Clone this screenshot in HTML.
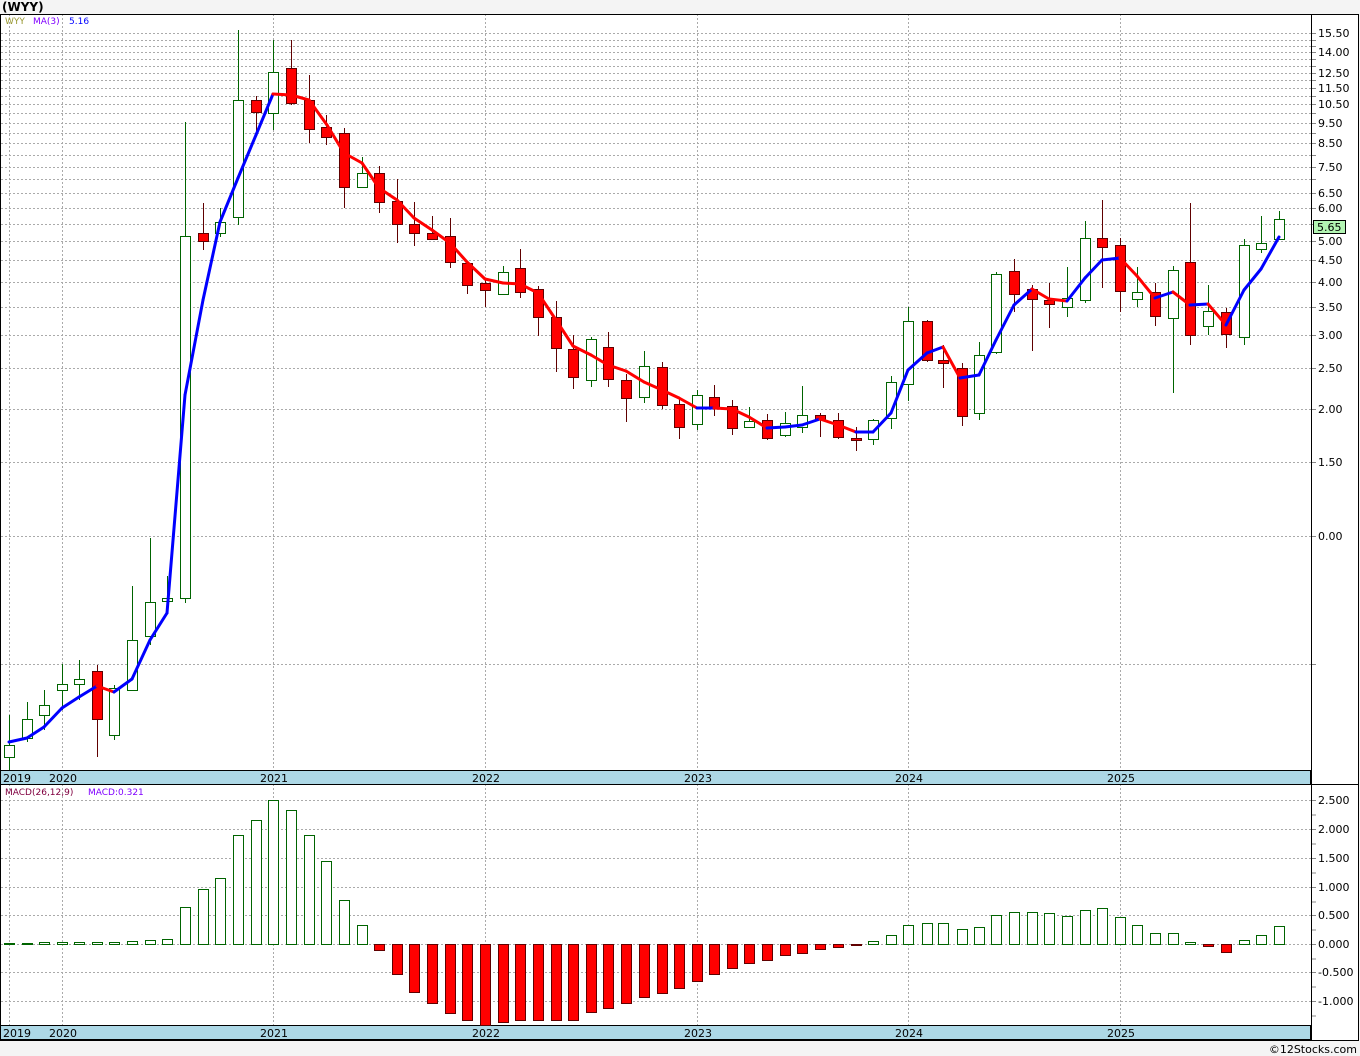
<!DOCTYPE html>
<html><head><meta charset="utf-8"><style>
html,body{margin:0;padding:0;background:#f4f4f4;width:1360px;height:1056px;overflow:hidden}
svg{display:block}
text{font-family:"DejaVu Sans","Liberation Sans",sans-serif}
</style></head><body>
<svg id="s" width="1360" height="1056" xmlns="http://www.w3.org/2000/svg"></svg>
<script>
const s=document.getElementById('s');let h='';
h+='<rect x="0" y="0" width="1360" height="1056" fill="#f4f4f4"/>';
h+='<rect x="0" y="14" width="1358" height="1026" fill="#fff"/>';
h+='<text x="2" y="11" font-size="12" font-weight="bold" fill="#000">(WYY)</text>';
// main grid
const gy=[33,40,46,52,59,66,73,80,88,96,104,113,123,133,143,155,167,179,193,208,224,241,260,282,307,335,368,409,462,536,664];
gy.forEach(y=>{h+=`<line x1="1" x2="1311" y1="${y+.5}" y2="${y+.5}" stroke="#aaa" stroke-dasharray="2,2"/>`;h+=`<line x1="1311" x2="1316" y1="${y+.5}" y2="${y+.5}" stroke="#888"/>`;});
const vx=[9,62,273,485,697,908,1120];
vx.forEach(x=>{h+=`<line x1="${x+.5}" x2="${x+.5}" y1="14" y2="770" stroke="#aaa" stroke-dasharray="2,2"/>`;h+=`<line x1="${x+.5}" x2="${x+.5}" y1="784" y2="1025" stroke="#aaa" stroke-dasharray="2,2"/>`;});
const lab=[[33,'15.50'],[52,'14.00'],[73,'12.50'],[88,'11.50'],[104,'10.50'],[123,'9.50'],[143,'8.50'],[167,'7.50'],[193,'6.50'],[208,'6.00'],[241,'5.00'],[260,'4.50'],[282,'4.00'],[307,'3.50'],[335,'3.00'],[368,'2.50'],[409,'2.00'],[462,'1.50'],[536,'0.00']];
lab.forEach(([y,t])=>{h+=`<text x="1318" y="${y+4}" font-size="11" fill="#000">${t}</text>`;});
// candles: x,H,L,bt,bb,up
const C=[[9,715,770,745,757,1],[27,702,742,719,738,1],[44,690,730,705,715,1],[62,664,710,684,690,1],[79,660,700,679,684,1],[97,665,757,671,719,0],[114,685,740,688,735,1],[132,586,690,640,690,1],[150,538,645,602,636,1],[167,576,605,598,601,1],[185,122,603,236,598,1],[203,203,250,233,241,0],[220,208,237,222,233,1],[238,30,225,100,217,1],[256,96,132,100,112,0],[273,40,130,72,113,1],[291,40,105,68,103,0],[309,75,143,100,129,0],[326,115,145,127,137,0],[344,128,208,133,187,0],[362,157,187,173,187,1],[379,166,213,173,202,0],[397,179,243,201,224,0],[414,202,246,224,233,0],[432,216,240,233,239,0],[450,218,268,236,262,0],[467,262,294,263,285,0],[485,280,307,283,290,0],[503,266,294,272,294,1],[520,249,298,268,292,0],[538,286,336,289,317,0],[556,301,372,317,348,0],[573,335,389,349,377,0],[591,337,387,339,380,1],[608,332,387,347,379,0],[626,374,422,380,398,0],[644,351,403,366,397,1],[662,362,409,367,405,0],[679,399,439,404,427,0],[697,390,430,395,424,1],[714,385,416,397,407,0],[732,400,435,406,428,0],[749,407,428,421,427,1],[767,414,440,420,438,0],[785,412,437,423,435,1],[802,386,433,415,427,1],[820,413,437,415,419,0],[838,413,439,420,437,0],[856,427,451,438,440,0],[873,419,445,420,439,1],[891,376,429,382,418,1],[908,307,401,321,384,1],[927,320,362,321,360,0],[943,345,388,360,363,0],[962,363,426,368,416,0],[979,342,420,355,413,1],[996,272,354,274,352,1],[1014,259,312,271,294,0],[1032,285,351,289,299,0],[1049,283,328,300,304,0],[1067,267,317,298,307,1],[1085,221,303,238,300,1],[1102,200,288,238,247,0],[1120,238,312,245,291,0],[1137,267,307,292,299,1],[1155,283,326,292,316,0],[1173,266,393,270,318,1],[1190,203,345,262,335,0],[1208,285,335,311,326,1],[1226,308,348,312,334,0],[1244,239,345,245,337,1],[1261,216,253,243,249,1],[1279,211,240,219,239,1]];
C.forEach(([x,H,L,t,b,u])=>{const wc=u?'#006400':'#600000';
h+=`<line x1="${x+.5}" x2="${x+.5}" y1="${H}" y2="${L}" stroke="${wc}" stroke-width="1"/>`;
h+=`<rect x="${x-5+.5}" y="${t+.5}" width="10" height="${Math.max(b-t,1)}" fill="${u?'#fff':'#f00'}" stroke="${u?'#006400':'#600000'}" stroke-width="1"/>`;});
// MA
const M=[[9,742],[27,738],[44,727],[62,708],[79,697],[97,686],[114,692],[132,679],[150,640],[167,613],[185,395],[203,300],[220,222],[238,178],[256,135],[273,94],[291,95],[309,100],[327,125],[344,153],[362,163],[379,188],[397,200],[414,218],[432,230],[450,243],[467,262],[485,279],[503,283],[520,284],[538,293],[556,320],[573,346],[591,355],[608,365],[626,371],[644,382],[662,390],[679,398],[697,408],[714,408],[732,409],[749,417],[767,428],[785,427],[802,425],[820,419],[838,425],[856,432],[873,432],[891,413],[908,370],[927,353],[943,347],[960,378],[979,375],[996,340],[1014,305],[1032,289],[1049,299],[1067,301],[1085,278],[1102,260],[1120,258],[1137,276],[1155,298],[1173,292],[1190,305],[1208,304],[1226,325],[1244,290],[1261,269],[1279,237]];
for(let i=1;i<M.length;i++){const [a,b]=M[i-1],[c,d]=M[i];h+=`<line x1="${a}" y1="${b}" x2="${c}" y2="${d}" stroke="${d>b?'#f00':'#00f'}" stroke-width="3" stroke-linecap="round"/>`;}
h+='<text x="5" y="24" font-size="9" fill="#999933">WYY</text><text x="33" y="24" font-size="9" fill="#8000ff">MA(3)</text><text x="69" y="24" font-size="9" fill="#0000ff">5.16</text>';
h+='<rect x="1313.5" y="220.5" width="32" height="13" fill="#b3f5b3" stroke="#000"/><text x="1317" y="231" font-size="11" fill="#000">5.65</text>';
// date bars
function bar(y){h+=`<rect x="0.5" y="${y+.5}" width="1310" height="14" fill="#add8e6" stroke="#000"/>`;
[[3,'2019'],[49,'2020'],[260,'2021'],[472,'2022'],[684,'2023'],[895,'2024'],[1107,'2025']].forEach(([x,t])=>{h+=`<text x="${x}" y="${y+12}" font-size="11" fill="#000">${t}</text>`;});}
bar(770);bar(1025);
// MACD grid
const my=[[800,'2.500'],[829,'2.000'],[858,'1.500'],[887,'1.000'],[915,'0.500'],[944,'0.000'],[972,'-0.500'],[1001,'-1.000']];
my.forEach(([y,t])=>{h+=`<line x1="1" x2="1311" y1="${y+.5}" y2="${y+.5}" stroke="#aaa" stroke-dasharray="2,2"/><line x1="1311" x2="1316" y1="${y+.5}" y2="${y+.5}" stroke="#888"/><line x1="1311" x2="1316" y1="${y+15}" y2="${y+15}" stroke="#888"/><text x="1318" y="${y+4}" font-size="11" fill="#000">${t}</text>`;});
const B=[943,943,942,942,942,942,942,941,940,939,907,889,878,835,820,800,810,835,861,900,925,950,974,992,1003,1013,1020,1025,1022,1020,1020,1020,1020,1012,1008,1003,997,993,988,981,974,968,963,960,955,953,949,947,945,941,935,925,923,923,929,927,915,912,912,913,916,910,908,917,925,933,933,942,946,952,940,935,926];
B.forEach((v,i)=>{const x=C[i][0];if(v<=944){h+=`<rect x="${x-5+.5}" y="${v+.5}" width="10" height="${Math.max(944-v,1)}" fill="#fff" stroke="#006400"/>`;}else{h+=`<rect x="${x-5+.5}" y="944.5" width="10" height="${v-944}" fill="#f00" stroke="#600000"/>`;}});
h+='<text x="5" y="795" font-size="9" fill="#800040">MACD(26,12,9)</text><text x="88" y="795" font-size="9" fill="#8000ff">MACD:0.321</text>';
// frame
h+='<line x1="0" x2="1359" y1="14.5" y2="14.5" stroke="#000"/><line x1="0.5" x2="0.5" y1="14" y2="1040" stroke="#000"/><line x1="1311.5" x2="1311.5" y1="14" y2="1040" stroke="#000"/><line x1="1358.5" x2="1358.5" y1="14" y2="1040" stroke="#000"/><line x1="0" x2="1359" y1="1040.5" y2="1040.5" stroke="#000"/><line x1="1311" x2="1359" y1="784.5" y2="784.5" stroke="#000"/>';
h+='<text x="1357" y="1053" font-size="11" fill="#000" text-anchor="end">©12Stocks.com</text>';
s.innerHTML=h;
</script>
</body></html>
